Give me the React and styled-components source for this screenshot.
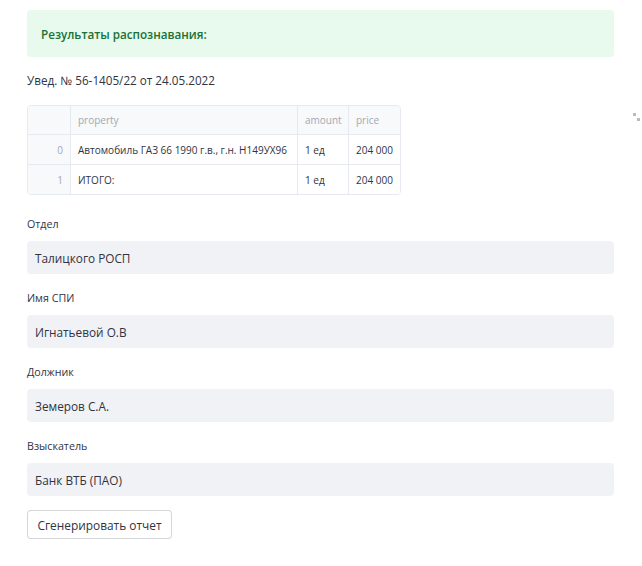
import React from "react";
import styled, { createGlobalStyle } from "styled-components";

const Global = createGlobalStyle`
  html, body { margin: 0; padding: 0; background: #fff; }
  body { font-family: "Open Sans", "Noto Sans", sans-serif; color: rgb(49,51,63); }
`;

const Page = styled.div`
  width: 587px;
  padding: 10px 0 0 27px;
  display: flex;
  flex-direction: column;
`;

const Alert = styled.div`
  height: 47px;
  box-sizing: border-box;
  background: rgba(33,195,84,0.1);
  border-radius: 4px;
  color: rgb(23,114,51);
  font-size: 11.7px;
  font-weight: 600;
  display: flex;
  align-items: center;
  padding: 0 0 0 14px;
`;

const Notice = styled.div`
  font-size: 11.7px;
  margin-top: 14px;
  line-height: 18px;
`;

const TableWrap = styled.div`
  position: relative;
  margin-top: 16px;
`;

const Table = styled.table`
  border-collapse: separate;
  border-spacing: 0;
  table-layout: fixed;
  width: 372px;
  border: 1px solid #e6e9ef;
  border-radius: 4px;
  font-size: 10px;
  overflow: hidden;
`;

const Th = styled.th`
  height: 29px;
  padding: 0 7px;
  font-weight: 400;
  text-align: left;
  color: #a3a8b4;
  background: #f8f9fb;
  border-bottom: 1px solid #e6e9ef;
  border-left: ${(p) => (p.$first ? "none" : "1px solid #e6e9ef")};
  width: ${(p) => p.$w}px;
  box-sizing: border-box;
`;

const Td = styled.td`
  height: 29px;
  padding: 0 7px;
  text-align: ${(p) => (p.$index ? "right" : "left")};
  color: ${(p) => (p.$index ? "#a3a8b4" : "rgb(49,51,63)")};
  background: ${(p) => (p.$index ? "#f8f9fb" : "#fff")};
  border-bottom: ${(p) => (p.$last ? "none" : "1px solid #e6e9ef")};
  border-left: ${(p) => (p.$index ? "none" : "1px solid #e6e9ef")};
  white-space: nowrap;
  overflow: hidden;
`;

const Expand = styled.svg`
  position: absolute;
  left: 606px;
  top: 8px;
`;

const Field = styled.div`
  display: flex;
  flex-direction: column;
  margin-top: ${(p) => p.$mt}px;
`;

const Label = styled.label`
  font-size: 10.7px;
  line-height: 16px;
  margin-bottom: 9px;
`;

const Input = styled.div`
  height: 33px;
  background: rgb(240,242,246);
  border-radius: 4px;
  display: flex;
  align-items: center;
  padding: 0 8px;
  font-size: 11.8px;
`;

const Button = styled.button`
  align-self: flex-start;
  margin-top: 14px;
  height: 29px;
  width: 145px;
  background: #fff;
  border: 1px solid rgba(49,51,63,0.2);
  border-radius: 4px;
  font-family: inherit;
  font-size: 11.9px;
  color: rgb(49,51,63);
  padding: 0;
`;

const rows = [
  ["0", "Автомобиль ГАЗ 66 1990 г.в., г.н. Н149УХ96", "1 ед", "204 000"],
  ["1", "ИТОГО:", "1 ед", "204 000"],
];

const fields = [
  ["Отдел", "Талицкого РОСП", 21],
  ["Имя СПИ", "Игнатьевой О.В", 16],
  ["Должник", "Земеров С.А.", 16],
  ["Взыскатель", "Банк ВТБ (ПАО)", 16],
];

export default function App() {
  return (
    <>
      <Global />
      <Page>
        <Alert>Результаты распознавания:</Alert>
        <Notice>Увед. № 56-1405/22 от 24.05.2022</Notice>
        <TableWrap>
          <Table>
            <thead>
              <tr>
                <Th $first $w={42}></Th>
                <Th $w={227}>property</Th>
                <Th $w={51}>amount</Th>
                <Th $w={52}>price</Th>
              </tr>
            </thead>
            <tbody>
              {rows.map((r, i) => (
                <tr key={i}>
                  <Td $index $last={i === rows.length - 1}>{r[0]}</Td>
                  <Td $last={i === rows.length - 1}>{r[1]}</Td>
                  <Td $last={i === rows.length - 1}>{r[2]}</Td>
                  <Td $last={i === rows.length - 1}>{r[3]}</Td>
                </tr>
              ))}
            </tbody>
          </Table>
          <Expand width="8" height="9" viewBox="0 0 8 9">
            <rect x="0" y="0" width="3" height="3" fill="#b8bcc4" />
            <rect x="4" y="5" width="3" height="3" fill="#b8bcc4" />
          </Expand>
        </TableWrap>
        {fields.map(([l, v, mt]) => (
          <Field key={l} $mt={mt}>
            <Label>{l}</Label>
            <Input>{v}</Input>
          </Field>
        ))}
        <Button>Сгенерировать отчет</Button>
      </Page>
    </>
  );
}
